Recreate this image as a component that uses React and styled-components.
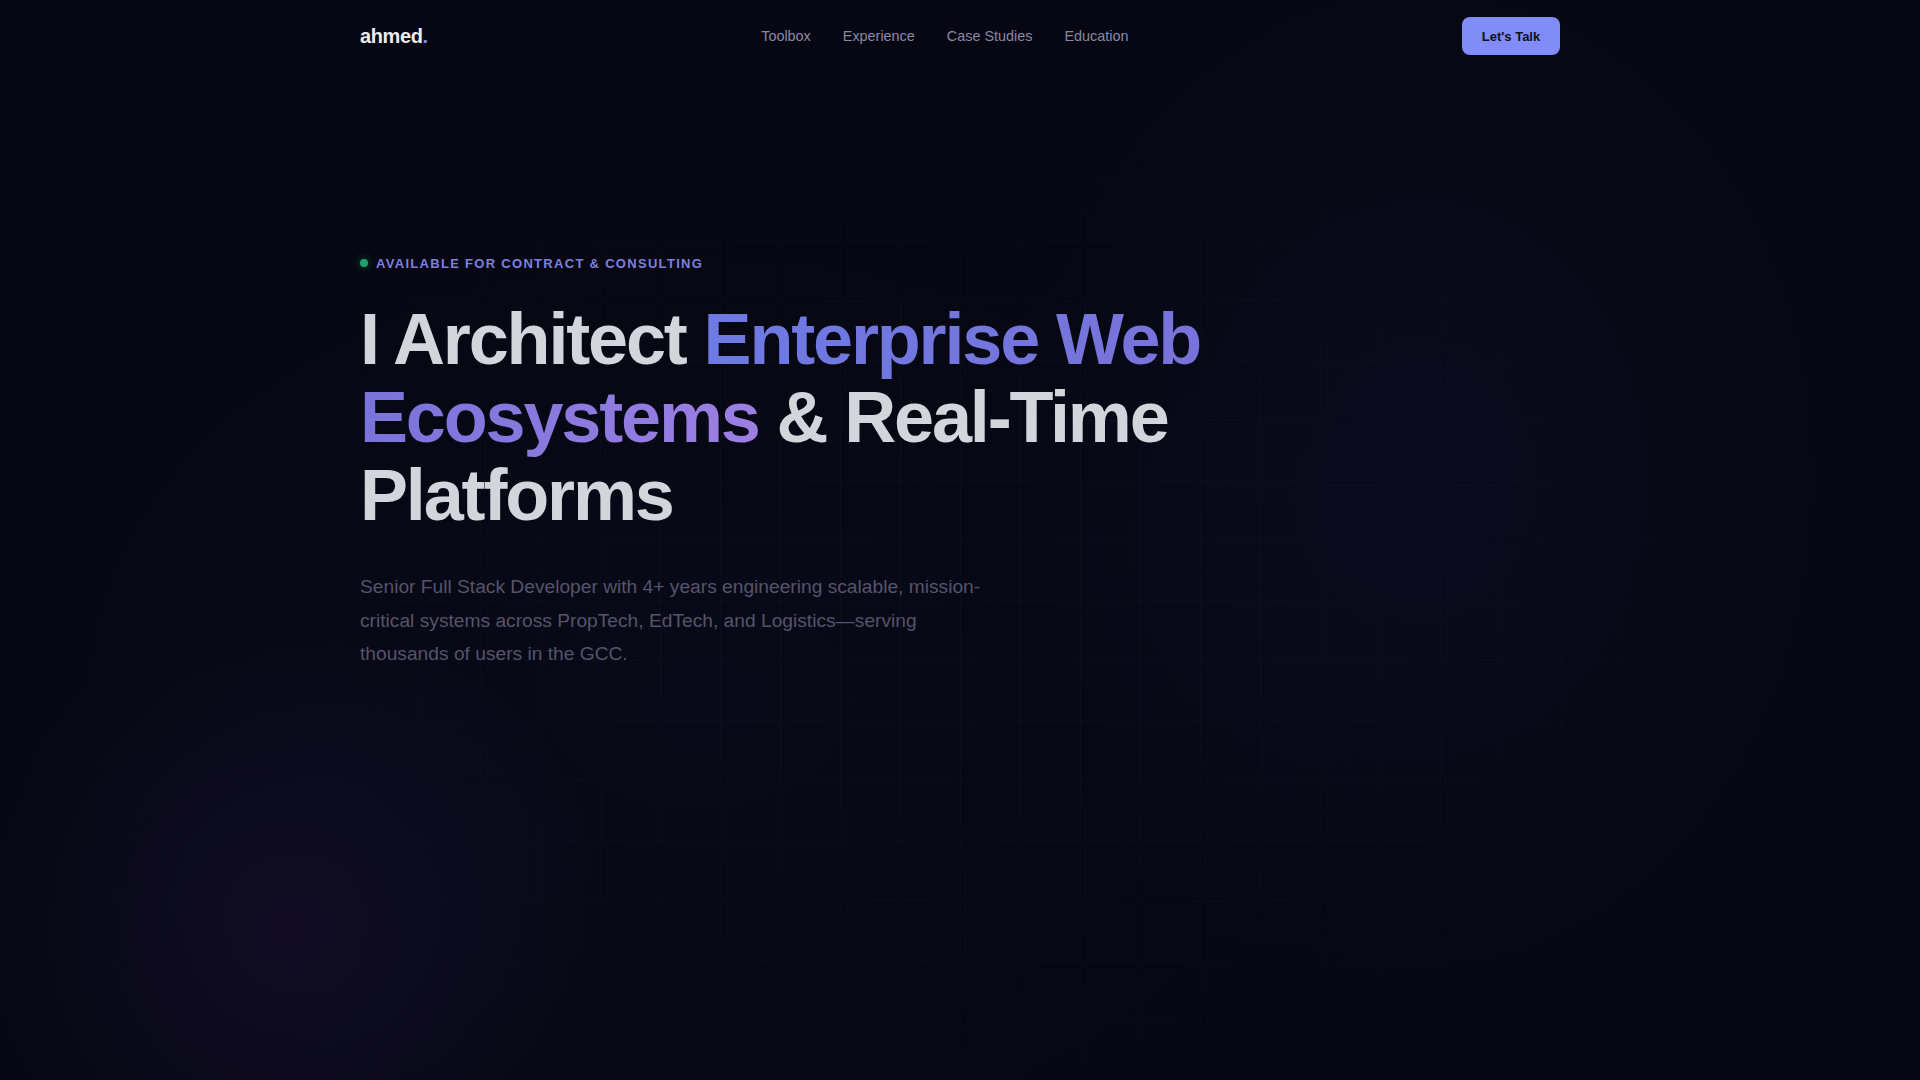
import React from "react";
import styled, { createGlobalStyle } from "styled-components";

const Global = createGlobalStyle`
  html, body { margin: 0; padding: 0; background: #060712; }
  body { font-family: "Liberation Sans", Arial, sans-serif; -webkit-font-smoothing: antialiased; }
  * { box-sizing: border-box; }
`;

const Page = styled.div`
  position: relative;
  min-height: 100vh;
  overflow: hidden;
  background:
    radial-gradient(circle at 290px 930px, rgba(38, 22, 70, 0.32), rgba(38, 22, 70, 0) 320px),
    radial-gradient(ellipse 420px 520px at 1420px 480px, rgba(18, 24, 60, 0.28), rgba(18, 24, 60, 0) 100%),
    radial-gradient(ellipse 700px 500px at 700px 700px, rgba(14, 14, 36, 0.35), rgba(14, 14, 36, 0) 100%),
    #060712;
`;

const Grid = styled.div`
  position: absolute;
  inset: 0;
  pointer-events: none;
  background-image:
    linear-gradient(to right, rgba(255, 255, 255, 0.02) 1px, transparent 1px),
    linear-gradient(to bottom, rgba(255, 255, 255, 0.02) 1px, transparent 1px);
  background-size: 60px 60px;
  -webkit-mask-image: radial-gradient(ellipse 900px 600px at 960px 600px, #000 30%, transparent 100%);
  mask-image: radial-gradient(ellipse 900px 600px at 960px 600px, #000 30%, transparent 100%);
`;

const Container = styled.div`
  position: relative;
  max-width: 1200px;
  margin: 0 auto;
`;

const Header = styled.header`
  height: 72px;
  display: flex;
  align-items: center;
  justify-content: space-between;
`;

const Logo = styled.a`
  font-size: 20px;
  font-weight: 700;
  letter-spacing: -0.02em;
  color: #ececf1;
  text-decoration: none;
  span { color: #818cf8; }
`;

const Nav = styled.nav`
  display: flex;
  gap: 32px;
`;

const NavLink = styled.a`
  font-size: 14.4px;
  color: #8a89a5;
  text-decoration: none;
`;

const CTA = styled.a`
  display: inline-flex;
  align-items: center;
  justify-content: center;
  width: 98px;
  height: 38px;
  border-radius: 8px;
  background: #818cf8;
  color: #0f1020;
  font-size: 13px;
  font-weight: 700;
  text-decoration: none;
`;

const Hero = styled.section`
  padding-top: 181px;
`;

const Badge = styled.div`
  display: flex;
  align-items: center;
  gap: 8px;
  height: 20px;
  margin-bottom: 28px;
  font-size: 13px;
  font-weight: 700;
  letter-spacing: 0.1em;
  text-transform: uppercase;
  color: #7c80e0;
`;

const Dot = styled.span`
  width: 8px;
  height: 8px;
  border-radius: 50%;
  background: #22a06b;
  box-shadow: 0 0 8px rgba(34, 197, 120, 0.45);
`;

const Title = styled.h1`
  margin: 0 0 36px;
  max-width: 860px;
  font-size: 72px;
  font-weight: 700;
  line-height: 1.08;
  letter-spacing: -0.03em;
  color: #d4d4dc;
`;

const Gradient = styled.span`
  background: linear-gradient(90deg, #6c7ae2 0%, #7873da 55%, #9d7fe2 100%);
  -webkit-background-clip: text;
  background-clip: text;
  color: transparent;
`;

const Lead = styled.p`
  margin: 0;
  max-width: 640px;
  font-size: 19.2px;
  line-height: 1.75;
  color: #55546a;
`;

export default function App() {
  return (
    <>
      <Global />
      <Page>
        <Grid />
        <Container>
          <Header>
            <Logo href="#">ahmed<span>.</span></Logo>
            <Nav>
              <NavLink href="#">Toolbox</NavLink>
              <NavLink href="#">Experience</NavLink>
              <NavLink href="#">Case Studies</NavLink>
              <NavLink href="#">Education</NavLink>
            </Nav>
            <CTA href="#">Let's Talk</CTA>
          </Header>
          <Hero>
            <Badge>
              <Dot />
              Available for Contract &amp; Consulting
            </Badge>
            <Title>
              I Architect <Gradient>Enterprise Web Ecosystems</Gradient> &amp; Real-Time Platforms
            </Title>
            <Lead>
              Senior Full Stack Developer with 4+ years engineering scalable, mission-critical systems
              across PropTech, EdTech, and Logistics—serving thousands of users in the GCC.
            </Lead>
          </Hero>
        </Container>
      </Page>
    </>
  );
}
